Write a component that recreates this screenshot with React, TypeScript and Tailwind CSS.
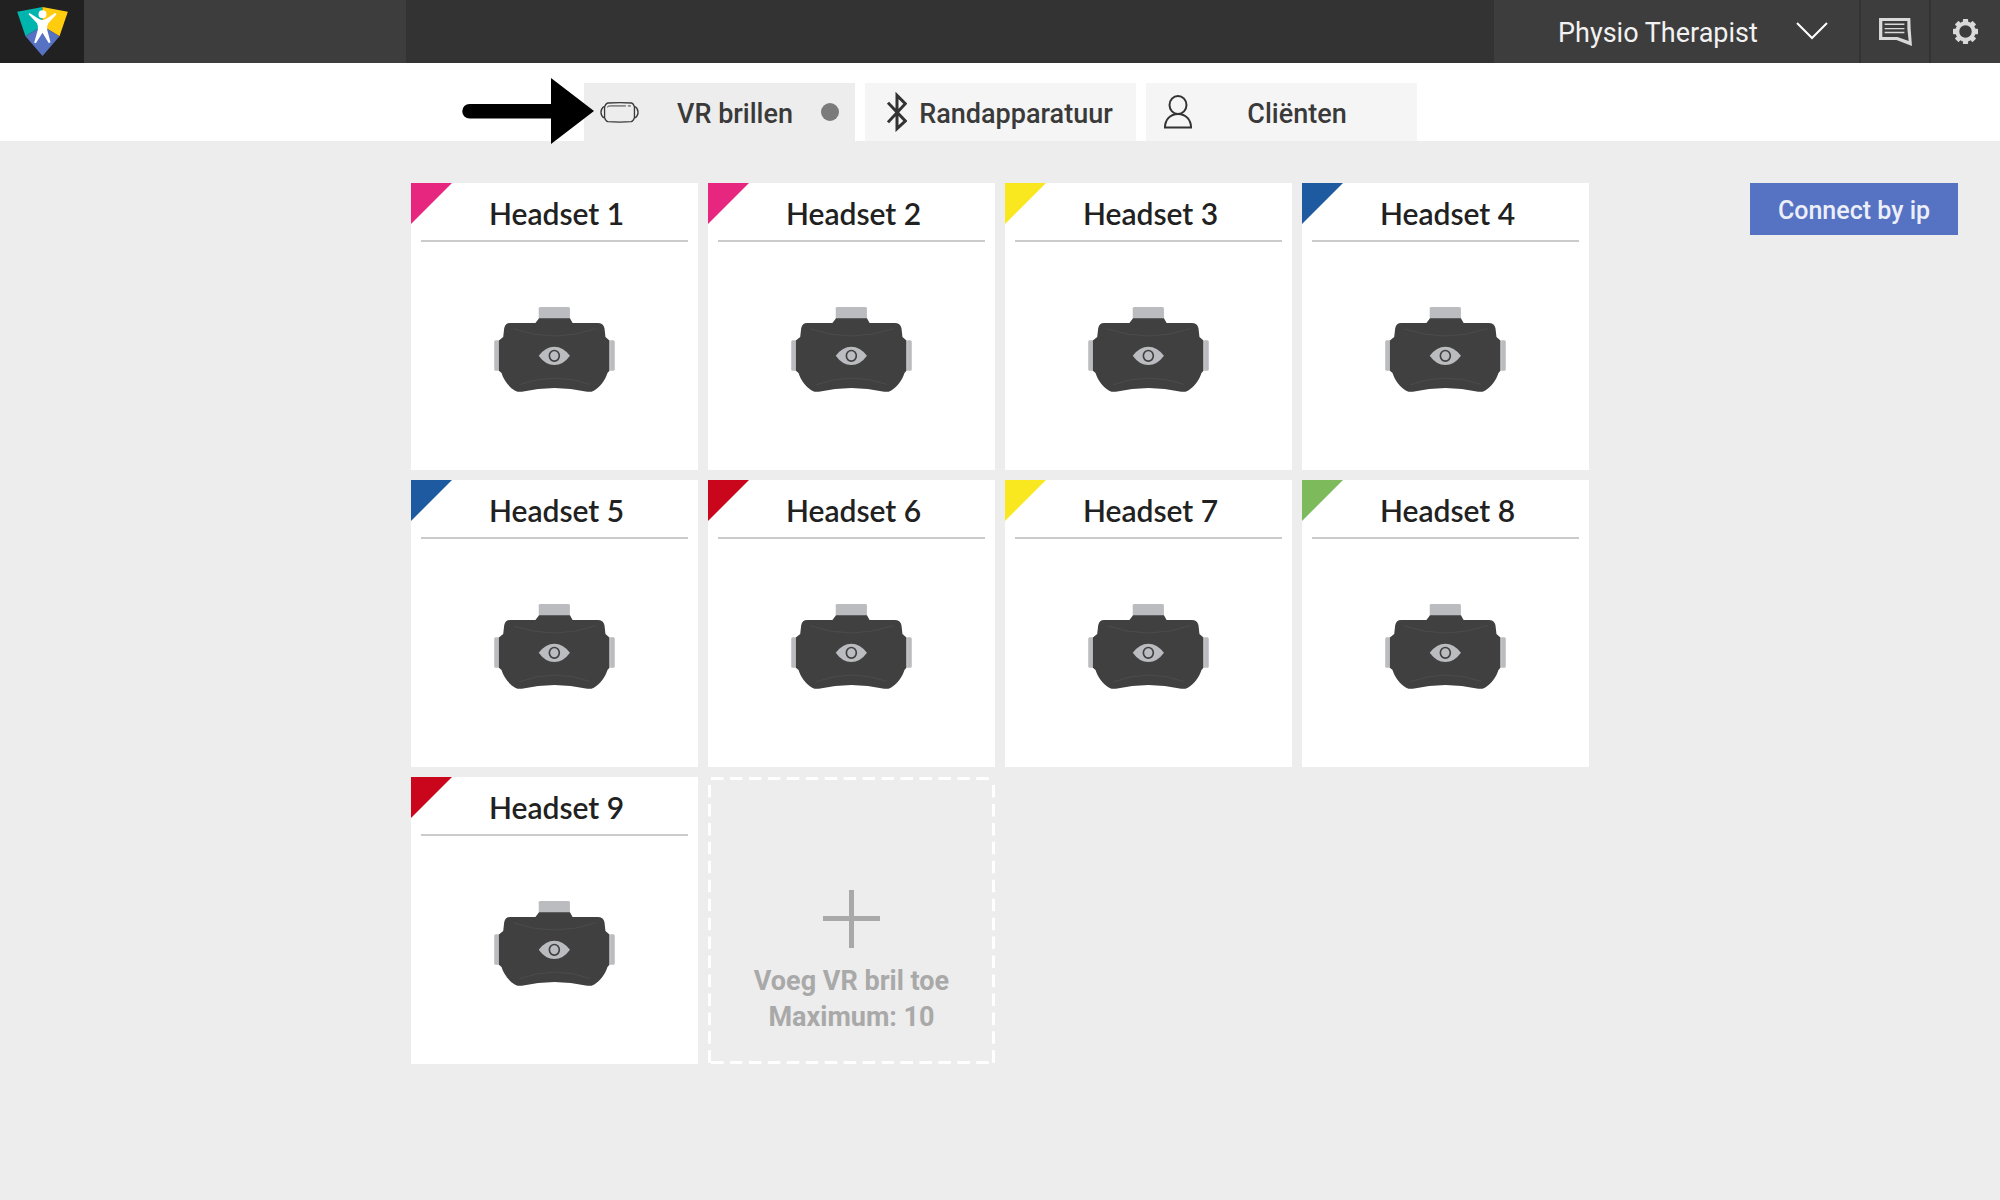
import { useState, type ReactNode } from "react";
import { clsx } from "clsx";

const headsets = [
  { name: "Headset 1", color: "bg-[#e6267f]" },
  { name: "Headset 2", color: "bg-[#e6267f]" },
  { name: "Headset 3", color: "bg-[#f9e820]" },
  { name: "Headset 4", color: "bg-[#1d5a9f]" },
  { name: "Headset 5", color: "bg-[#1d5a9f]" },
  { name: "Headset 6", color: "bg-[#c9061b]" },
  { name: "Headset 7", color: "bg-[#f9e820]" },
  { name: "Headset 8", color: "bg-[#7dba5c]" },
  { name: "Headset 9", color: "bg-[#c9061b]" },
];

const Logo = () => (
  <svg viewBox="50 20 152 147" className="w-[51px] h-[49px]" aria-hidden="true">
    <path d="M50 34 126 20V77L75 108Z" fill="#00b5ad" />
    <path d="M126 20 202 34 177 108 126 77Z" fill="#ffcd0d" />
    <path d="M75 108 126 77 177 108 126 167Z" fill="#5672c3" />
    <circle cx="126" cy="42" r="12" fill="#fff" />
    <path
      d="M84 42 87 38 112 54Q126 64 140 54L164 38 168 42 144 68Q139 74 140 88L150 126 145 129 126 97 106 129 101 127 112 88Q113 74 109 68Z"
      fill="#fff"
    />
  </svg>
);

const ChatIcon = () => (
  <svg viewBox="1195 52 100 85" className="w-[33px] h-[28px]" aria-hidden="true">
    <path
      d="M1195 52H1290L1291 85 1295 137 1248 119H1195ZM1205 61V110H1251L1285 122 1281 85V61Z"
      fill="#d9d9d9"
      fillRule="evenodd"
    />
    <path d="M1212 71H1272M1212 84H1272M1212 96H1272" stroke="#d9d9d9" strokeWidth="4" />
  </svg>
);

const GearIcon = () => (
  <svg viewBox="-38 -38 76 76" className="w-[25px] h-[25px]" aria-hidden="true">
    <circle r="25" fill="none" stroke="#d9d9d9" strokeWidth="12" />
    {[0, 45, 90, 135].map((angle) => (
      <path
        key={angle}
        d="M-8 -28V-36Q-8 -38 -6 -38H6Q8 -38 8 -36V-28ZM-8 28V36Q-8 38 -6 38H6Q8 38 8 36V28Z"
        transform={`rotate(${angle})`}
        fill="#d9d9d9"
      />
    ))}
  </svg>
);

const GlassesIcon = () => (
  <svg viewBox="480 125 117 64" className="w-[39px] h-[21px] shrink-0" fill="none" stroke="#3a3a3a" strokeWidth="4" aria-hidden="true">
    <path d="M503 128Q540 126 575 128 581 129 584 140V173Q580 184 574 185 539 188 503 185 497 184 493 173V140Q497 129 503 128Z" />
    <path d="M491 139Q482 146 482 156 482 167 491 174M586 139Q595 146 595 156 595 167 586 174" />
    <path d="M501 141Q503 137 510 137H558M564 137H573" strokeWidth="3" />
  </svg>
);

const BluetoothIcon = () => (
  <svg viewBox="1337 96 60 120" className="w-[20px] h-[40px]" fill="none" stroke="#333" strokeWidth="9" aria-hidden="true">
    <path d="M1340 128 1392 183 1367 206V106L1392 131 1340 187" />
  </svg>
);

const ClientIcon = () => (
  <svg viewBox="0 0 28 34" className="w-[28px] h-[34px]" fill="none" stroke="#333" strokeWidth="2" aria-hidden="true">
    <ellipse cx="14" cy="10" rx="8.5" ry="9" />
    <path d="M1 32.5C1 25 6 19 14 19S27 25 27 32.5Z" />
  </svg>
);

const HeadsetImage = () => (
  <svg viewBox="0 0 363 256" className="w-[121px] h-[85px]" aria-hidden="true">
    <path d="M134 36V4Q135 0 139 0H223Q227 0 228 4V36Z" fill="#bbbcc0" />
    <path d="M14 100H4Q0 101 0 105V188Q0 192 4 192H14ZM349 100H359Q363 101 363 105V188Q363 192 359 192H349Z" fill="#bbbcc0" />
    <path
      d="M135 34H228L236 48H311Q329 48 332 64L335 90 347 101V192L341 199C335 220 318 242 300 252Q290 257 280 255 181 233 83 255 73 257 63 252C45 242 28 220 22 199L14 192V101L27 90 30 64Q33 48 48 48H124Z"
      fill="#404040"
    />
    <path d="M58 66Q181 109 308 65M76 234Q181 195 288 233" fill="none" stroke="#4b4b4c" strokeWidth="3" />
    <path d="M134 147Q155 120 181 120T228 147Q208 175 181 175T134 147Z" fill="#bbbcc0" />
    <ellipse cx="181" cy="147" rx="15" ry="16" fill="none" stroke="#404040" strokeWidth="5" />
  </svg>
);

type TabProps = {
  label: string;
  icon: ReactNode;
  active: boolean;
  dot?: boolean;
  onClick: () => void;
};

const Tab = ({ label, icon, active, dot, onClick }: TabProps) => (
  <button
    role="tab"
    aria-selected={active}
    onClick={onClick}
    className={clsx(
      "relative flex h-[58px] w-[271px] items-center px-4 text-[27px] font-medium text-[#3a3a3a]",
      active ? "bg-[#ededed]" : "bg-[#f5f5f5]"
    )}
  >
    <span className={clsx("flex w-8 shrink-0", dot ? "justify-start" : "justify-center")}>{icon}</span>
    <span className="flex-1 pt-1 text-center leading-8 whitespace-nowrap">{label}</span>
    {dot && <span className="absolute right-4 top-5 size-[18px] rounded-full bg-[#7b7b7b]" />}
  </button>
);

const HeadsetCard = ({ name, color }: { name: string; color: string }) => (
  <article className="relative flex h-[287px] flex-col bg-white px-[10px]">
    <span className={clsx("absolute left-0 top-0 size-[41px] [clip-path:polygon(0_0,100%_0,0_100%)]", color)} />
    <h2 className="border-b-2 border-[#cbcbcb] pt-3 pb-[9px] pl-1 text-center font-[Lato] text-[30px] leading-9 font-semibold text-[#212121]">
      {name}
    </h2>
    <div className="flex flex-1 items-center justify-center pb-[14px]">
      <HeadsetImage />
    </div>
  </article>
);

const AddCard = () => (
  <button className="relative flex h-[287px] flex-col items-center justify-end pb-[29px] text-[27px] leading-9 font-bold text-[#a9a9a9]">
    <svg
      viewBox="0 0 287 287"
      className="absolute inset-0 size-full"
      stroke="#fff"
      strokeWidth="3"
      strokeDasharray="12.5 6.45"
      aria-hidden="true"
    >
      <path d="M3 1.5H287M3 285.5H287M1.5 8V287M285.5 8V287" />
    </svg>
    <svg viewBox="0 0 57 58" className="mb-[15px] w-[57px] h-[58px]" stroke="#a9a9a9" strokeWidth="5" aria-hidden="true">
      <path d="M28.5 0V58M0 28.5H57" />
    </svg>
    <span>Voeg VR bril toe</span>
    <span>Maximum: 10</span>
  </button>
);

const App = () => {
  const [tab, setTab] = useState("glasses");

  return (
    <div className="min-h-screen bg-[#ededed] font-[Roboto,sans-serif]">
      <header className="flex h-[63px] bg-[#333]">
        <a href="#" aria-label="Home" className="flex w-[84px] items-center justify-center bg-[#212121]">
          <Logo />
        </a>
        <div className="w-[322px] bg-[#3d3d3d]" />
        <div className="ml-auto flex gap-[2px]">
          <div className="relative w-[365px] bg-[#3d3d3d]">
            <select
              aria-label="User"
              className="size-full appearance-none bg-transparent pt-1 pl-16 text-[27px] text-[#f2f2f2] outline-none"
            >
              <option>Physio Therapist</option>
            </select>
            <svg
              viewBox="0 0 32 18"
              className="pointer-events-none absolute right-[31px] top-[22px] w-8 h-[18px]"
              fill="none"
              stroke="#fff"
              strokeWidth="2"
              aria-hidden="true"
            >
              <path d="M1 1 16 16 31 1" />
            </svg>
          </div>
          <button aria-label="Messages" className="flex w-[68px] items-center justify-center bg-[#3d3d3d]">
            <ChatIcon />
          </button>
          <button aria-label="Settings" className="flex w-[69px] items-center justify-center bg-[#3d3d3d]">
            <GearIcon />
          </button>
        </div>
      </header>

      <nav className="flex justify-center bg-white pt-5">
        <div role="tablist" className="relative flex gap-[10px]">
          <Tab label="VR brillen" icon={<GlassesIcon />} active={tab === "glasses"} dot onClick={() => setTab("glasses")} />
          <Tab label="Randapparatuur" icon={<BluetoothIcon />} active={tab === "devices"} onClick={() => setTab("devices")} />
          <Tab label="Cliënten" icon={<ClientIcon />} active={tab === "clients"} onClick={() => setTab("clients")} />
          {/* pointer to the first tab */}
          <svg
            viewBox="0 0 132 66"
            className="pointer-events-none absolute -left-[122px] -top-[5px] w-[132px] h-[66px]"
            aria-hidden="true"
          >
            <path d="M7.500 26H89V0L132 33 89 66V40.500H7.500A7.250 7.250 0 0 1 7.500 26Z" />
          </svg>
        </div>
      </nav>

      <main className="grid grid-cols-[1fr_auto_1fr] items-start px-[42px] py-[42px]">
        <div className="col-start-2 grid grid-cols-[repeat(4,287px)] gap-[10px]">
          {headsets.map((headset) => (
            <HeadsetCard key={headset.name} {...headset} />
          ))}
          <AddCard />
        </div>
        <button className="h-[52px] w-[208px] justify-self-end bg-[#5672c3] pt-1 text-[25px] font-medium text-[#eceff8]">
          Connect by ip
        </button>
      </main>
    </div>
  );
};

export default App;
